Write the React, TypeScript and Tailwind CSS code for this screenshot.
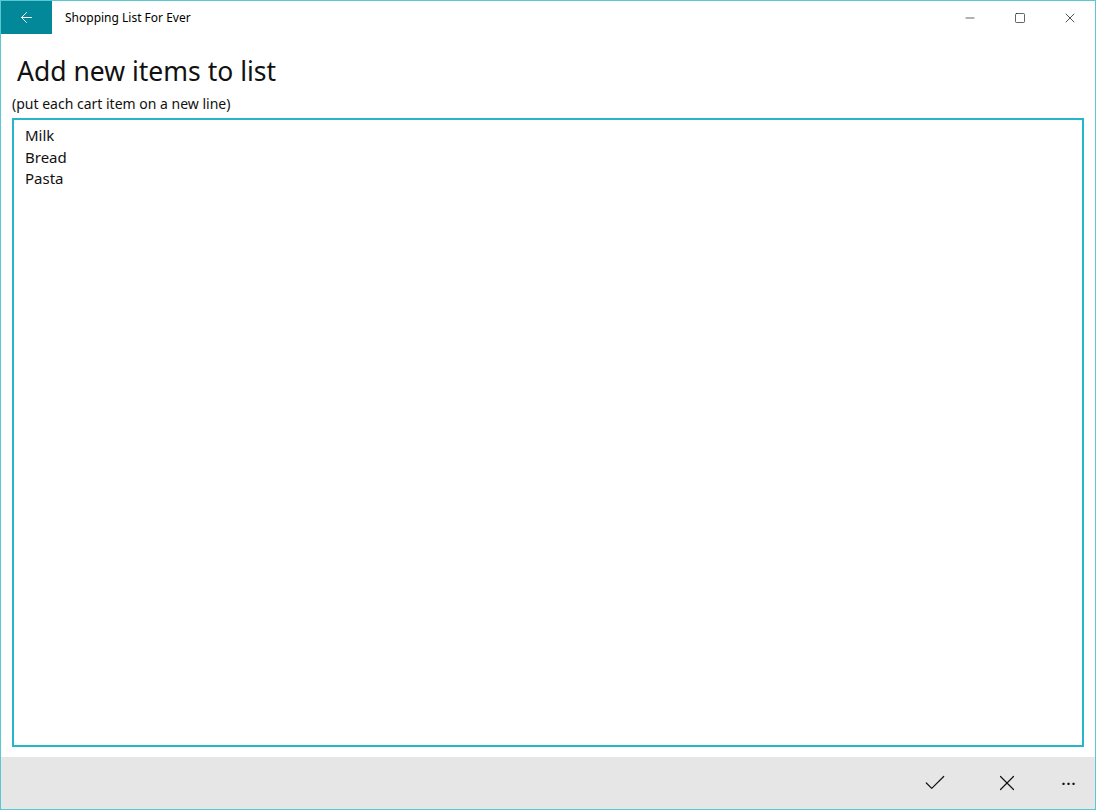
import { ArrowLeft, Minus, Square, X, Check } from 'lucide-react';

const FONT = { fontFamily: '"Segoe UI", "Noto Sans", "Open Sans", sans-serif' };

const App = () => {
  return (
    <div
      className="w-[1096px] h-[810px] flex flex-col bg-white border border-[#5ac7d5] text-[#111]"
      style={FONT}
    >
      {/* Title bar */}
      <div className="h-[33px] flex items-stretch shrink-0">
        <div className="w-[51px] bg-[#03889a] flex items-center justify-center text-white">
          <ArrowLeft size={17} strokeWidth={1.4} />
        </div>
        <div className="flex-1 flex items-center pl-[13px] text-[12px] text-black">
          Shopping List For Ever
        </div>
        <div className="flex items-stretch">
          <div className="w-[50px] flex items-center justify-center">
            <Minus size={14} strokeWidth={1.1} />
          </div>
          <div className="w-[50px] flex items-center justify-center">
            <Square size={12} strokeWidth={1.3} />
          </div>
          <div className="w-[50px] flex items-center justify-center">
            <X size={16} strokeWidth={1.1} />
          </div>
        </div>
      </div>

      {/* Content */}
      <div className="flex-1 flex flex-col px-[11px] pb-[10px]">
        <h1 className="text-[26.5px] leading-[34px] pl-[5px] mt-[20px] font-normal">
          Add new items to list
        </h1>
        <p className="text-[14px] leading-[18px] mt-[7px]">(put each cart item on a new line)</p>
        <textarea
          className="flex-1 mt-[5px] border-2 border-[#26b6c9] outline-none resize-none px-[11px] py-[5px] text-[15px] leading-[21.5px] text-[#111]"
          style={FONT}
          defaultValue={'Milk\nBread\nPasta'}
        />
      </div>

      {/* Command bar */}
      <div className="h-[52px] shrink-0 bg-[#e6e6e6] flex items-center justify-end">
        <div className="w-[72px] flex justify-center">
          <Check size={26} strokeWidth={1.1} />
        </div>
        <div className="w-[72px] flex justify-center">
          <X size={26} strokeWidth={1.1} />
        </div>
        <div className="w-[52px] flex justify-center text-[14px] font-bold tracking-[1px]">···</div>
      </div>
    </div>
  );
};

export default App;
